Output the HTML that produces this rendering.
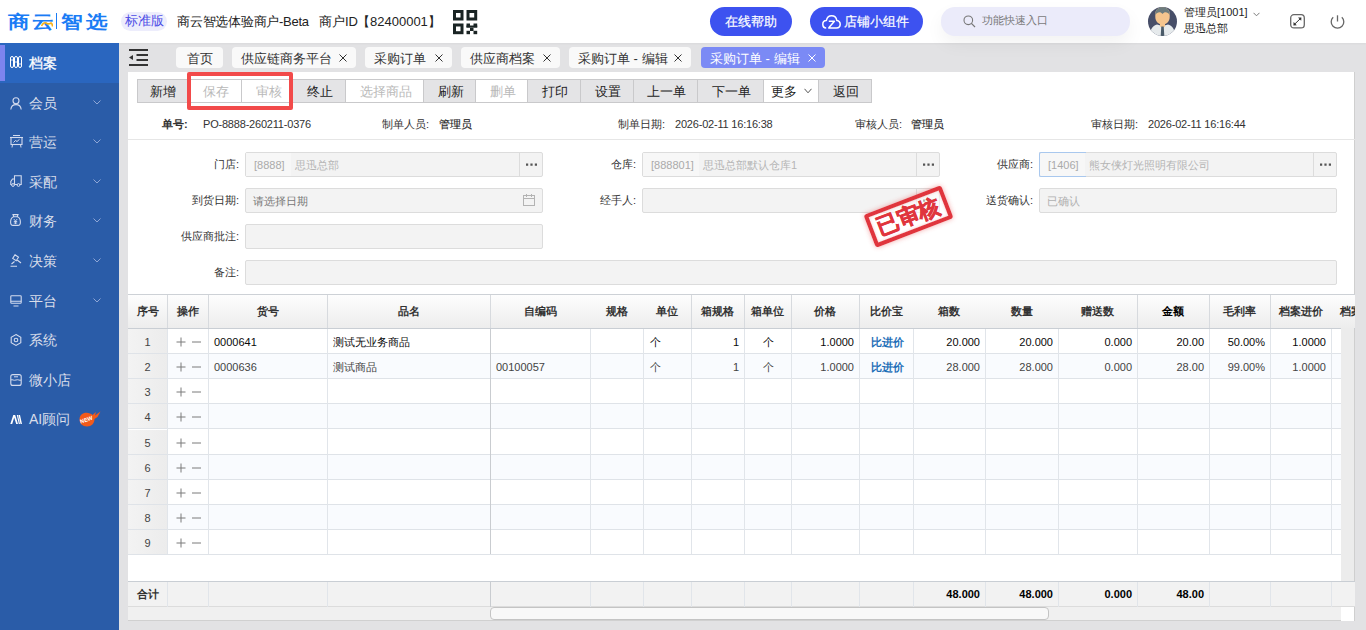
<!DOCTYPE html><html><head><meta charset="utf-8"><title>r</title><style>
*{margin:0;padding:0;box-sizing:border-box}
html,body{width:1366px;height:630px;overflow:hidden;background:#e2e2e4;font-family:"Liberation Sans",sans-serif;color:#333}
.a{position:absolute;white-space:nowrap}
.hdr{left:0;top:0;width:1366px;height:43px;background:#fff;box-shadow:0 1px 2px rgba(0,0,0,.04)}
.logo{top:9px;font-size:18px;transform:scaleX(1.2);transform-origin:0 0;font-weight:700;-webkit-text-stroke:0px #1a7cf5;color:#1a7cf5;letter-spacing:1px;line-height:26px}
.badge{left:121px;top:12px;width:46px;height:19px;border-radius:10px;background:#ededfc;color:#4b4ce6;font-size:13px;line-height:18px;text-align:center}
.mtxt{top:12px;font-size:13px;color:#222;line-height:20px}
.pill{top:7px;height:29px;border-radius:15px;background:#3d52f0;color:#fff;font-size:13px;line-height:29px;-webkit-text-stroke:0.2px #fff}
.search{left:941px;top:7px;width:189px;height:29px;border-radius:14px;background:#ebebfa;box-shadow:0 8px 18px rgba(0,0,0,.05)}
.side{left:0;top:43px;width:119px;height:587px;background:#2a5ca8}
.si{left:0;width:119px;height:40px;color:#d9deea;font-size:14px}
.si .t{position:absolute;left:29px;top:0;line-height:40px}
.si .ic{position:absolute;left:10px;top:14px}
.chev{position:absolute;left:93px;top:17px}
.tab{top:47px;height:21px;border-radius:4px;background:#f9f9f9;font-size:13px;color:#333;line-height:21px}
.tab .x{position:absolute;right:8px;top:0}
.panel{left:128px;top:72px;width:1227px;height:549px;background:#fff;border-right:1px solid #cfcfcf}
.btn{top:79px;height:24px;background:#e4e4e6;border:1px solid #c9c9cb;border-left:none;font-size:13px;color:#222;line-height:24px;padding-left:3px;text-align:center}
.btn.d{background:#fff;color:#b9b9b9}
.lbl{font-size:11px;color:#333;line-height:14px}
.inp{height:25px;background:#f3f3f3;border:1px solid #dcdcdc;border-radius:2px}
.th{font-size:11px;font-weight:bold;color:#333;text-align:center}
.td{font-size:11px;color:#222}
</style></head><body>
<div class="a hdr"></div>
<div class="a logo" style="left:8px">商</div>
<div class="a logo" style="left:32px">云</div>
<div class="a logo" style="left:61px">智</div>
<div class="a logo" style="left:86px">选</div>
<div class="a" style="left:56px;top:13px;width:1px;height:16px;background:#1a7cf5"></div>
<svg class="a" style="left:41px;top:21px" width="12" height="6" viewBox="0 0 12 6"><path d="M0.5 5 C2 2 4 1 6 2.5 C7.5 3.5 9 2.5 10 2 C11 2.5 11.5 4 11.5 5.5" fill="none" stroke="#f5b21a" stroke-width="1.6"/></svg>
<div class="a badge">标准版</div>
<div class="a mtxt" style="left:177px;letter-spacing:-0.25px">商云智选体验商户-Beta</div>
<div class="a mtxt" style="left:319px">商户ID</div>
<div class="a mtxt" style="left:357px">【82400001】</div>
<svg class="a" style="left:452.5px;top:9.5px" width="25" height="25" viewBox="0 0 25 25">
<g fill="none" stroke="#1a2424" stroke-width="3"><rect x="1.5" y="1.5" width="7.5" height="7.5"/><rect x="15" y="1.5" width="7.7" height="7.5"/><rect x="1.5" y="15" width="7.5" height="7.7"/></g>
<g fill="#1a2424"><rect x="13.5" y="13.5" width="3.5" height="4"/><rect x="20.5" y="13.5" width="3.7" height="4"/><rect x="13.5" y="15.5" width="10.7" height="2"/><rect x="17" y="17.5" width="3.5" height="3.5"/><rect x="13.5" y="20.8" width="3.5" height="3.4"/><rect x="20.5" y="20.8" width="3.7" height="3.4"/></g></svg>
<div class="a pill" style="left:710px;width:82px;text-align:center">在线帮助</div>
<div class="a pill" style="left:810px;width:113px"><svg style="position:absolute;left:12px;top:7.5px" width="19" height="14" viewBox="0 0 19 14"><path d="M4.2 13 C2 13 0.8 11.2 0.8 9.2 C0.8 7 2.4 5.4 4.4 5.4 C5 2.6 7 0.8 9.6 0.8 C12.4 0.8 14.4 2.8 14.8 5.4 C16.8 5.7 18.2 7.3 18.2 9.3 C18.2 11.5 16.6 13 14.4 13 H6.2 M6.8 6.2 H12.4 L6.6 13" fill="none" stroke="#fff" stroke-width="1.5" stroke-linejoin="round"/></svg><span style="position:absolute;left:34px;top:0">店铺小组件</span></div>
<div class="a search"></div>
<svg class="a" style="left:963px;top:14.5px" width="13" height="13" viewBox="0 0 13 13"><circle cx="5.3" cy="5.3" r="4.3" fill="none" stroke="#777" stroke-width="1.1"/><path d="M8.4 8.4 L12 12" stroke="#777" stroke-width="1.2"/></svg>
<div class="a" style="left:982px;top:12px;font-size:11px;color:#7a7a7a;line-height:16px">功能快速入口</div>
<svg class="a" style="left:1148px;top:6.6px" width="29" height="29" viewBox="0 0 29 29"><defs><clipPath id="cav"><circle cx="14.5" cy="14.5" r="14.5"/></clipPath></defs>
<g clip-path="url(#cav)"><rect width="29" height="29" fill="#474e68"/>
<path d="M2 29 C2 22 5 18.5 9 17.5 L14.5 19 L20 17.5 C24 18.5 27 22 27 29Z" fill="#e6eaec"/>
<path d="M12 14 H17 V19.5 L14.5 21 L12 19.5Z" fill="#f5c58e"/>
<path d="M7.3 7 C7.3 2.5 10.5 0.5 14.5 0.5 C18.5 0.5 21.7 2.5 21.7 7 L21.7 10 C21.7 14.5 18.5 17.5 14.5 17.5 C10.5 17.5 7.3 14.5 7.3 10Z" fill="#f5c58e"/>
<path d="M7.3 8 C7.3 2.5 10.5 0.3 14.5 0.3 C18.5 0.3 21.7 2.5 21.7 8 C20.5 6 19 5 17 5.2 C16 5.3 15 6.5 14.5 7 C14 6.5 13 5.3 12 5.2 C10 5 8.5 6 7.3 8Z" fill="#6d7c7e"/>
<path d="M13.3 19.5 H15.7 L16.3 29 H12.7Z" fill="#4b5b69"/>
</g></svg>
<div class="a" style="left:1184px;top:5px;font-size:11px;color:#222;line-height:15px">管理员[1001]</div>
<svg class="a" style="left:1253px;top:12px" width="7" height="5" viewBox="0 0 7 5"><path d="M0.5 0.8 L3.5 3.8 L6.5 0.8" fill="none" stroke="#7a7a7a" stroke-width="1"/></svg>
<div class="a" style="left:1184px;top:21px;font-size:11px;color:#222;line-height:15px">思迅总部</div>
<svg class="a" style="left:1290px;top:14px" width="15" height="15" viewBox="0 0 15 15"><rect x="0.7" y="0.7" width="13.6" height="13.2" rx="3.2" fill="none" stroke="#666" stroke-width="1.3"/><path d="M4.6 10.2 L10.4 4.6" stroke="#333" stroke-width="1"/><path d="M8 3.6 L11.4 3.4 L11.2 6.8Z M3.6 8 L3.4 11.4 L6.8 11.2Z" fill="#333"/></svg>
<svg class="a" style="left:1330px;top:15px" width="15" height="14" viewBox="0 0 15 14"><path d="M3.2 2.2 A6.3 6.3 0 1 0 11.8 2.2" fill="none" stroke="#666" stroke-width="1.3"/><path d="M7.5 0.3 V6.5" stroke="#666" stroke-width="1.3"/></svg>
<div class="a side"></div>
<div class="a si" style="top:43.0px;background:#2a66bf;color:#fff;font-weight:normal;-webkit-text-stroke:0.3px #fff"><div class="a" style="left:0;top:2px;width:5px;height:36px;background:#7c84ee"></div><svg class="ic" style="top:13px" width="12" height="12" viewBox="0 0 12 12"><g fill="none" stroke="#fff" stroke-width="1"><rect x="0.5" y="0.5" width="3" height="11" rx="1.5"/><rect x="4.5" y="0.5" width="3" height="11" rx="1.5"/><rect x="8.5" y="0.5" width="3" height="11" rx="1.5"/></g><path d="M1 4 H3 M5 6 H7 M9 8 H11" stroke="#fff" stroke-width="0.8"/></svg><span class="t">档案</span></div>
<div class="a si" style="top:82.6px"><svg class="ic" style="top:14px" width="12" height="13" viewBox="0 0 12 13"><circle cx="6" cy="3.8" r="3" fill="none" stroke="#d3dbee" stroke-width="1.1"/><path d="M0.8 12.5 C1.2 9 3.3 7.6 6 7.6 C8.7 7.6 10.8 9 11.2 12.5" fill="none" stroke="#d3dbee" stroke-width="1.1"/></svg><span class="t">会员</span><svg class="chev" width="8" height="5" viewBox="0 0 8 5"><path d="M0.5 0.5 L4 4 L7.5 0.5" fill="none" stroke="#8ea6d6" stroke-width="1"/></svg></div>
<div class="a si" style="top:122.2px"><svg class="ic" style="top:13px" width="13" height="13" viewBox="0 0 13 13"><rect x="1" y="2.5" width="11" height="7" fill="none" stroke="#d3dbee" stroke-width="1.1"/><path d="M0 2.5 H13 M3 0.5 H10 M2.5 9.5 L2 12.5 M10.5 9.5 L11 12.5 M3.5 7.5 L5.5 5.5 L7 6.5 L9.5 4.3" fill="none" stroke="#d3dbee" stroke-width="1"/></svg><span class="t">营运</span><svg class="chev" width="8" height="5" viewBox="0 0 8 5"><path d="M0.5 0.5 L4 4 L7.5 0.5" fill="none" stroke="#8ea6d6" stroke-width="1"/></svg></div>
<div class="a si" style="top:161.8px"><svg class="ic" style="top:13px" width="12" height="12" viewBox="0 0 12 12"><path d="M4.5 0.8 H11.2 V9.5 H4.5 Z M4.5 4 H2.5 L0.8 6.5 V9.5 H4.5" fill="none" stroke="#d3dbee" stroke-width="1.1"/><circle cx="3" cy="10" r="1.4" fill="#2a5ca8" stroke="#d3dbee" stroke-width="1"/><circle cx="8.5" cy="10" r="1.4" fill="#2a5ca8" stroke="#d3dbee" stroke-width="1"/></svg><span class="t">采配</span><svg class="chev" width="8" height="5" viewBox="0 0 8 5"><path d="M0.5 0.5 L4 4 L7.5 0.5" fill="none" stroke="#8ea6d6" stroke-width="1"/></svg></div>
<div class="a si" style="top:201.4px"><svg class="ic" style="top:13px" width="11" height="12" viewBox="0 0 11 12"><path d="M3 0.6 H8 L7.2 2.8 H3.8 Z M3.8 2.8 C1.5 3.5 0.6 5.5 0.6 8 C0.6 10.5 1.5 11.4 3 11.4 H8 C9.5 11.4 10.4 10.5 10.4 8 C10.4 5.5 9.5 3.5 7.2 2.8" fill="none" stroke="#d3dbee" stroke-width="1.1"/><path d="M3.8 5 L5.5 7 L7.2 5 M5.5 7 V10 M3.8 7.5 H7.2 M3.8 9 H7.2" fill="none" stroke="#d3dbee" stroke-width="0.9"/></svg><span class="t">财务</span><svg class="chev" width="8" height="5" viewBox="0 0 8 5"><path d="M0.5 0.5 L4 4 L7.5 0.5" fill="none" stroke="#8ea6d6" stroke-width="1"/></svg></div>
<div class="a si" style="top:241.0px"><svg class="ic" style="top:13px" width="12" height="13" viewBox="0 0 12 13"><path d="M5 0.8 L8.5 3.2 L6.2 6.8 L2.7 4.4 Z M6.5 5.5 L11 9 M1.5 10 L4.5 7.5 M0.5 12.2 H7" fill="none" stroke="#d3dbee" stroke-width="1.1"/></svg><span class="t">决策</span><svg class="chev" width="8" height="5" viewBox="0 0 8 5"><path d="M0.5 0.5 L4 4 L7.5 0.5" fill="none" stroke="#8ea6d6" stroke-width="1"/></svg></div>
<div class="a si" style="top:280.6px"><svg class="ic" style="top:14px" width="12" height="12" viewBox="0 0 12 12"><rect x="0.8" y="0.8" width="10.4" height="7.4" rx="0.8" fill="none" stroke="#d3dbee" stroke-width="1.1"/><path d="M0.8 6.2 H11.2 M3.5 11 H8.5" stroke="#d3dbee" stroke-width="1.1"/></svg><span class="t">平台</span><svg class="chev" width="8" height="5" viewBox="0 0 8 5"><path d="M0.5 0.5 L4 4 L7.5 0.5" fill="none" stroke="#8ea6d6" stroke-width="1"/></svg></div>
<div class="a si" style="top:320.2px"><svg class="ic" style="top:14px" width="12" height="12" viewBox="0 0 12 12"><path d="M6 0.6 L10.8 3.3 V8.7 L6 11.4 L1.2 8.7 V3.3 Z" fill="none" stroke="#d3dbee" stroke-width="1.1"/><circle cx="6" cy="6" r="1.8" fill="none" stroke="#d3dbee" stroke-width="1.1"/></svg><span class="t">系统</span></div>
<div class="a si" style="top:359.8px"><svg class="ic" style="top:14px" width="12" height="12" viewBox="0 0 12 12"><rect x="0.8" y="0.6" width="10.4" height="10.8" rx="2" fill="none" stroke="#d3dbee" stroke-width="1.1"/><path d="M4 2.8 H8 M0.8 6 C2.5 5 3.5 7 6 6 C8.5 5 9.5 7 11.2 6" fill="none" stroke="#d3dbee" stroke-width="1"/></svg><span class="t">微小店</span></div>
<div class="a si" style="top:399.4px"><svg class="ic" style="top:16px" width="12" height="9" viewBox="0 0 12 9"><path d="M0.3 9 L3.3 0 H5.2 L8 9 H6.2 L4.2 2.5 L2.2 9 Z M8.5 0 H10 L12 9 H10.5 Z M6.8 0 H8 L10 9 H8.8Z" fill="#fff"/></svg><span class="t">AI顾问</span><svg style="position:absolute;left:79px;top:12px" width="22" height="16" viewBox="0 0 22 16"><path d="M8 15.5 C3.5 15.5 0.5 12.5 0.5 8.5 C0.5 4.5 3.5 1.8 7.5 1.8 C10 1.8 12 2.8 13.5 4 L17 1 L16 4.5 L21.5 0.5 L18.5 6 L15.5 8 C15.5 12.5 12.5 15.5 8 15.5Z" fill="#f25a1a"/><text x="7.5" y="10.5" font-size="5.5" font-weight="bold" fill="#fff" text-anchor="middle" transform="rotate(-18 7.5 9)" font-family="Liberation Sans">NEW</text></svg></div>
<svg class="a" style="left:129px;top:49px" width="19" height="17" viewBox="0 0 19 17"><rect x="0" y="0" width="19" height="2" fill="#333"/><rect x="7.5" y="5" width="11.5" height="2" fill="#333"/><rect x="7.5" y="10" width="11.5" height="2" fill="#333"/><rect x="0" y="15" width="19" height="2" fill="#333"/><path d="M0 8.5 L4 6 V11Z" fill="#333"/></svg>
<div class="a tab" style="left:176px;width:47px"><span style="position:absolute;left:0;width:100%;text-align:center;top:1px">首页</span></div>
<div class="a tab" style="left:232px;width:124px"><span style="position:absolute;left:9px;top:1px">供应链商务平台</span><svg class="x" style="top:6.5px;right:9px" width="8" height="8" viewBox="0 0 8 8"><path d="M0.5 0.5 L7.5 7.5 M7.5 0.5 L0.5 7.5" stroke="#333" stroke-width="1"/></svg></div>
<div class="a tab" style="left:365px;width:87px"><span style="position:absolute;left:9px;top:1px">采购订单</span><svg class="x" style="top:6.5px;right:9px" width="8" height="8" viewBox="0 0 8 8"><path d="M0.5 0.5 L7.5 7.5 M7.5 0.5 L0.5 7.5" stroke="#333" stroke-width="1"/></svg></div>
<div class="a tab" style="left:461px;width:99px"><span style="position:absolute;left:9px;top:1px">供应商档案</span><svg class="x" style="top:6.5px;right:9px" width="8" height="8" viewBox="0 0 8 8"><path d="M0.5 0.5 L7.5 7.5 M7.5 0.5 L0.5 7.5" stroke="#333" stroke-width="1"/></svg></div>
<div class="a tab" style="left:569px;width:122px"><span style="position:absolute;left:9px;top:1px">采购订单 - 编辑</span><svg class="x" style="top:6.5px;right:9px" width="8" height="8" viewBox="0 0 8 8"><path d="M0.5 0.5 L7.5 7.5 M7.5 0.5 L0.5 7.5" stroke="#333" stroke-width="1"/></svg></div>
<div class="a tab" style="left:701px;width:124px;background:#7b8af5;color:#fff"><span style="position:absolute;left:9px;top:1px">采购订单 - 编辑</span><svg class="x" style="top:6.5px;right:9px" width="8" height="8" viewBox="0 0 8 8"><path d="M0.5 0.5 L7.5 7.5 M7.5 0.5 L0.5 7.5" stroke="#fff" stroke-width="1"/></svg></div>
<div class="a panel"></div>
<div class="a btn" style="left:137px;width:53px;border-left:1px solid #c9c9cb"></div>
<div class="a" style="left:150.2px;top:80px;font-size:13px;line-height:23px;color:#222">新增</div>
<div class="a btn d" style="left:190px;width:52px"></div>
<div class="a" style="left:203.0px;top:80px;font-size:13px;line-height:23px;color:#b9b9b9">保存</div>
<div class="a btn d" style="left:242px;width:48px"></div>
<div class="a" style="left:255.8px;top:80px;font-size:13px;line-height:23px;color:#b9b9b9">审核</div>
<div class="a btn" style="left:290px;width:56px"></div>
<div class="a" style="left:307.3px;top:80px;font-size:13px;line-height:23px;color:#222">终止</div>
<div class="a btn d" style="left:346px;width:78px"></div>
<div class="a" style="left:360.1px;top:80px;font-size:13px;line-height:23px;color:#b9b9b9">选择商品</div>
<div class="a btn" style="left:424px;width:52px"></div>
<div class="a" style="left:438.1px;top:80px;font-size:13px;line-height:23px;color:#222">刷新</div>
<div class="a btn d" style="left:476px;width:52px"></div>
<div class="a" style="left:489.8px;top:80px;font-size:13px;line-height:23px;color:#b9b9b9">删单</div>
<div class="a btn" style="left:528px;width:53px"></div>
<div class="a" style="left:542.3px;top:80px;font-size:13px;line-height:23px;color:#222">打印</div>
<div class="a btn" style="left:581px;width:53px"></div>
<div class="a" style="left:594.8px;top:80px;font-size:13px;line-height:23px;color:#222">设置</div>
<div class="a btn" style="left:634px;width:64px"></div>
<div class="a" style="left:647.3px;top:80px;font-size:13px;line-height:23px;color:#222">上一单</div>
<div class="a btn" style="left:698px;width:66px"></div>
<div class="a" style="left:711.9px;top:80px;font-size:13px;line-height:23px;color:#222">下一单</div>
<div class="a btn d" style="left:764px;width:55px"></div>
<div class="a" style="left:771.3px;top:80px;font-size:13px;line-height:23px;color:#222">更多</div>
<svg class="a" style="left:804px;top:88px" width="8" height="6" viewBox="0 0 8 6"><path d="M0.5 0.8 L4 4.8 L7.5 0.8" fill="none" stroke="#555" stroke-width="1"/></svg>
<div class="a btn" style="left:819px;width:53px"></div>
<div class="a" style="left:832.5px;top:80px;font-size:13px;line-height:23px;color:#222">返回</div>
<div class="a" style="left:187px;top:72px;width:106px;height:38px;border:4px solid #f24a4a;border-radius:2px"></div>
<div class="a lbl" style="left:162px;top:117px;font-weight:bold">单号:</div>
<div class="a lbl" style="left:203px;top:117px;;letter-spacing:-0.2px">PO-8888-260211-0376</div>
<div class="a lbl" style="left:382px;top:117px;">制单人员:</div>
<div class="a lbl" style="left:439px;top:117px;-webkit-text-stroke:0.15px #222;color:#222">管理员</div>
<div class="a lbl" style="left:618px;top:117px;">制单日期:</div>
<div class="a lbl" style="left:675px;top:117px;;letter-spacing:-0.2px">2026-02-11 16:16:38</div>
<div class="a lbl" style="left:855px;top:117px;">审核人员:</div>
<div class="a lbl" style="left:911px;top:117px;-webkit-text-stroke:0.15px #222;color:#222">管理员</div>
<div class="a lbl" style="left:1091px;top:117px;">审核日期:</div>
<div class="a lbl" style="left:1148px;top:117px;;letter-spacing:-0.2px">2026-02-11 16:16:44</div>
<div class="a" style="left:128px;top:139px;width:1227px;height:1px;background:#e6e6e6"></div>
<div class="a lbl" style="left:119px;top:157px;width:120px;text-align:right">门店:</div>
<div class="a inp" style="left:245px;top:152px;width:298px"></div>
<div class="a" style="left:246px;top:153px;width:45px;height:23px;background:#f7f7f7"></div>
<div class="a" style="left:254px;top:158px;font-size:11px;color:#aaa;line-height:14px">[8888]</div>
<div class="a" style="left:295px;top:158px;font-size:11px;color:#b5b5b5;line-height:14px">思迅总部</div>
<div class="a" style="left:519px;top:153px;width:1px;height:23px;background:#dcdcdc"></div>
<svg class="a" style="left:526px;top:163px" width="12" height="3" viewBox="0 0 12 3"><path d="M0 0.5 h2.2 v2.2 h-2.2z M4.4 0.5 h2.2 v2.2 h-2.2z M8.8 0.5 h2.2 v2.2 h-2.2z" fill="#555"/></svg>
<div class="a lbl" style="left:119px;top:193px;width:120px;text-align:right">到货日期:</div>
<div class="a inp" style="left:245px;top:188px;width:298px"></div>
<svg class="a" style="left:523px;top:194px" width="12" height="12" viewBox="0 0 12 12"><rect x="0.5" y="1.5" width="11" height="10" fill="none" stroke="#b3b3b3"/><path d="M0.5 4.5 H11.5 M3.5 0 V3 M8.5 0 V3" stroke="#b3b3b3"/></svg>
<div class="a" style="left:253px;top:194px;font-size:11px;color:#777;line-height:14px">请选择日期</div>
<div class="a lbl" style="left:119px;top:229px;width:120px;text-align:right">供应商批注:</div>
<div class="a inp" style="left:245px;top:224px;width:298px"></div>
<div class="a lbl" style="left:119px;top:265px;width:120px;text-align:right">备注:</div>
<div class="a inp" style="left:245px;top:260px;width:1092px"></div>
<div class="a lbl" style="left:516px;top:157px;width:120px;text-align:right">仓库:</div>
<div class="a inp" style="left:642px;top:152px;width:298px"></div>
<div class="a" style="left:643px;top:153px;width:56px;height:23px;background:#f7f7f7"></div>
<div class="a" style="left:651px;top:158px;font-size:11px;color:#aaa;line-height:14px">[888801]</div>
<div class="a" style="left:703px;top:158px;font-size:11px;color:#b5b5b5;line-height:14px">思迅总部默认仓库1</div>
<div class="a" style="left:916px;top:153px;width:1px;height:23px;background:#dcdcdc"></div>
<svg class="a" style="left:923px;top:163px" width="12" height="3" viewBox="0 0 12 3"><path d="M0 0.5 h2.2 v2.2 h-2.2z M4.4 0.5 h2.2 v2.2 h-2.2z M8.8 0.5 h2.2 v2.2 h-2.2z" fill="#555"/></svg>
<div class="a lbl" style="left:516px;top:193px;width:120px;text-align:right">经手人:</div>
<div class="a inp" style="left:642px;top:188px;width:298px"></div>
<div class="a" style="left:916px;top:189px;width:1px;height:23px;background:#dcdcdc"></div>
<svg class="a" style="left:923px;top:199px" width="12" height="3" viewBox="0 0 12 3"><path d="M0 0.5 h2.2 v2.2 h-2.2z M4.4 0.5 h2.2 v2.2 h-2.2z M8.8 0.5 h2.2 v2.2 h-2.2z" fill="#555"/></svg>
<div class="a lbl" style="left:913px;top:157px;width:120px;text-align:right">供应商:</div>
<div class="a inp" style="left:1039px;top:152px;width:298px"></div>
<div class="a" style="left:1040px;top:153px;width:45px;height:23px;background:#f7f7f7"></div>
<div class="a" style="left:1048px;top:158px;font-size:11px;color:#aaa;line-height:14px">[1406]</div>
<div class="a" style="left:1089px;top:158px;font-size:11px;color:#b5b5b5;line-height:14px">熊女侠灯光照明有限公司</div>
<div class="a" style="left:1313px;top:153px;width:1px;height:23px;background:#dcdcdc"></div>
<svg class="a" style="left:1320px;top:163px" width="12" height="3" viewBox="0 0 12 3"><path d="M0 0.5 h2.2 v2.2 h-2.2z M4.4 0.5 h2.2 v2.2 h-2.2z M8.8 0.5 h2.2 v2.2 h-2.2z" fill="#555"/></svg>
<div class="a" style="left:1039px;top:152px;width:47px;height:25px;border:1px solid #a9c8ee;border-right:none;border-radius:2px 0 0 2px"></div>
<div class="a lbl" style="left:913px;top:193px;width:120px;text-align:right">送货确认:</div>
<div class="a inp" style="left:1039px;top:188px;width:298px"></div>
<div class="a" style="left:1047px;top:194px;font-size:11px;color:#b0b0b0;line-height:14px">已确认</div>
<div class="a" style="left:867px;top:199px;width:83px;height:35px;border:4px solid #e0353d;border-radius:3px;transform:rotate(-21deg);background:rgba(255,255,255,.55);color:#e0353d;font-size:22px;font-weight:bold;-webkit-text-stroke:0.6px #e0353d;line-height:27px;text-align:center;letter-spacing:0px;box-shadow:0 0 5px rgba(230,60,60,.45), inset 0 0 3px rgba(230,60,60,.3)">已审核</div>
<div class="a" style="left:128px;top:294px;width:1227px;height:327px;overflow:hidden">
<div class="a" style="left:0;top:0;width:1227px;height:35px;background:linear-gradient(#fdfdfd,#ededed);border-top:1px solid #cdd1d6;border-bottom:1px solid #c9ced4"></div>
<div class="a th" style="left:0px;top:10px;width:39px;line-height:14px;color:#333">序号</div>
<div class="a th" style="left:39px;top:10px;width:41px;line-height:14px;color:#333">操作</div>
<div class="a" style="left:39px;top:1px;width:1px;height:33px;background:#d7dade"></div>
<div class="a th" style="left:80px;top:10px;width:119px;line-height:14px;color:#333">货号</div>
<div class="a" style="left:80px;top:1px;width:1px;height:33px;background:#d7dade"></div>
<div class="a th" style="left:199px;top:10px;width:163px;line-height:14px;color:#333">品名</div>
<div class="a" style="left:199px;top:1px;width:1px;height:33px;background:#d7dade"></div>
<div class="a th" style="left:362px;top:10px;width:100px;line-height:14px;color:#333">自编码</div>
<div class="a" style="left:362px;top:1px;width:1px;height:33px;background:#d7dade"></div>
<div class="a th" style="left:462px;top:10px;width:53px;line-height:14px;color:#333">规格</div>
<div class="a th" style="left:515px;top:10px;width:48px;line-height:14px;color:#333">单位</div>
<div class="a th" style="left:563px;top:10px;width:53px;line-height:14px;color:#333">箱规格</div>
<div class="a" style="left:563px;top:1px;width:1px;height:33px;background:#d7dade"></div>
<div class="a th" style="left:616px;top:10px;width:47px;line-height:14px;color:#333">箱单位</div>
<div class="a" style="left:616px;top:1px;width:1px;height:33px;background:#d7dade"></div>
<div class="a th" style="left:663px;top:10px;width:68px;line-height:14px;color:#333">价格</div>
<div class="a" style="left:663px;top:1px;width:1px;height:33px;background:#d7dade"></div>
<div class="a th" style="left:731px;top:10px;width:54px;line-height:14px;color:#333">比价宝</div>
<div class="a" style="left:731px;top:1px;width:1px;height:33px;background:#d7dade"></div>
<div class="a th" style="left:785px;top:10px;width:72px;line-height:14px;color:#333">箱数</div>
<div class="a th" style="left:857px;top:10px;width:73px;line-height:14px;color:#333">数量</div>
<div class="a th" style="left:930px;top:10px;width:79px;line-height:14px;color:#333">赠送数</div>
<div class="a th" style="left:1009px;top:10px;width:72px;line-height:14px;color:#000">金额</div>
<div class="a" style="left:1009px;top:1px;width:1px;height:33px;background:#d7dade"></div>
<div class="a th" style="left:1081px;top:10px;width:61px;line-height:14px;color:#333">毛利率</div>
<div class="a" style="left:1081px;top:1px;width:1px;height:33px;background:#d7dade"></div>
<div class="a th" style="left:1142px;top:10px;width:61px;line-height:14px;color:#333">档案进价</div>
<div class="a" style="left:1142px;top:1px;width:1px;height:33px;background:#d7dade"></div>
<div class="a th" style="left:1212px;top:10px;line-height:14px">档案进价</div>
<div class="a" style="left:0;top:35.00px;width:1213px;height:25.12px;background:#fff;border-bottom:1px solid #dfe3e8"></div>
<div class="a" style="left:0;top:35.00px;width:39px;height:25.12px;background:linear-gradient(90deg,#f3f3f3,#ececec);border-bottom:1px solid #dfe3e8"></div>
<div class="a td" style="left:0;top:36.00px;width:39px;text-align:center;line-height:25.12px;color:#444">1</div>
<svg class="a" style="left:48px;top:43.00px" width="26" height="10" viewBox="0 0 26 10"><path d="M0.5 5 H9.5 M5 0.5 V9.5 M16 5 H25" stroke="#7a7a7a" stroke-width="1"/></svg>
<div class="a td" style="left:86px;top:36.00px;line-height:25.12px;color:#0a0a0a">0000641</div>
<div class="a td" style="left:205px;top:36.00px;line-height:25.12px;color:#0a0a0a">测试无业务商品</div>
<div class="a td" style="left:522px;top:36.00px;line-height:25.12px;color:#0a0a0a">个</div>
<div class="a td" style="left:563px;top:36.00px;width:48px;text-align:right;line-height:25.12px;color:#0a0a0a">1</div>
<div class="a td" style="left:617px;top:36.00px;width:47px;text-align:center;line-height:25.12px;color:#0a0a0a">个</div>
<div class="a td" style="left:663px;top:36.00px;width:63px;text-align:right;line-height:25.12px;color:#0a0a0a">1.0000</div>
<div class="a td" style="left:732px;top:36.00px;width:54px;text-align:center;line-height:25.12px;color:#1f6fb8;font-weight:bold">比进价</div>
<div class="a td" style="left:785px;top:36.00px;width:67px;text-align:right;line-height:25.12px;color:#0a0a0a">20.000</div>
<div class="a td" style="left:857px;top:36.00px;width:68px;text-align:right;line-height:25.12px;color:#0a0a0a">20.000</div>
<div class="a td" style="left:930px;top:36.00px;width:74px;text-align:right;line-height:25.12px;color:#0a0a0a">0.000</div>
<div class="a td" style="left:1009px;top:36.00px;width:67px;text-align:right;line-height:25.12px;color:#0a0a0a">20.00</div>
<div class="a td" style="left:1081px;top:36.00px;width:56px;text-align:right;line-height:25.12px;color:#0a0a0a">50.00%</div>
<div class="a td" style="left:1142px;top:36.00px;width:56px;text-align:right;line-height:25.12px;color:#0a0a0a">1.0000</div>
<div class="a" style="left:0;top:60.12px;width:1213px;height:25.12px;background:#f9fbfe;border-bottom:1px solid #dfe3e8"></div>
<div class="a" style="left:0;top:60.12px;width:39px;height:25.12px;background:linear-gradient(90deg,#f3f3f3,#ececec);border-bottom:1px solid #dfe3e8"></div>
<div class="a td" style="left:0;top:61.12px;width:39px;text-align:center;line-height:25.12px;color:#444">2</div>
<svg class="a" style="left:48px;top:68.00px" width="26" height="10" viewBox="0 0 26 10"><path d="M0.5 5 H9.5 M5 0.5 V9.5 M16 5 H25" stroke="#7a7a7a" stroke-width="1"/></svg>
<div class="a td" style="left:86px;top:61.12px;line-height:25.12px;color:#444">0000636</div>
<div class="a td" style="left:205px;top:61.12px;line-height:25.12px;color:#444">测试商品</div>
<div class="a td" style="left:368px;top:61.12px;line-height:25.12px;color:#444">00100057</div>
<div class="a td" style="left:522px;top:61.12px;line-height:25.12px;color:#444">个</div>
<div class="a td" style="left:563px;top:61.12px;width:48px;text-align:right;line-height:25.12px;color:#444">1</div>
<div class="a td" style="left:617px;top:61.12px;width:47px;text-align:center;line-height:25.12px;color:#444">个</div>
<div class="a td" style="left:663px;top:61.12px;width:63px;text-align:right;line-height:25.12px;color:#444">1.0000</div>
<div class="a td" style="left:732px;top:61.12px;width:54px;text-align:center;line-height:25.12px;color:#1f6fb8;font-weight:bold">比进价</div>
<div class="a td" style="left:785px;top:61.12px;width:67px;text-align:right;line-height:25.12px;color:#444">28.000</div>
<div class="a td" style="left:857px;top:61.12px;width:68px;text-align:right;line-height:25.12px;color:#444">28.000</div>
<div class="a td" style="left:930px;top:61.12px;width:74px;text-align:right;line-height:25.12px;color:#444">0.000</div>
<div class="a td" style="left:1009px;top:61.12px;width:67px;text-align:right;line-height:25.12px;color:#444">28.00</div>
<div class="a td" style="left:1081px;top:61.12px;width:56px;text-align:right;line-height:25.12px;color:#444">99.00%</div>
<div class="a td" style="left:1142px;top:61.12px;width:56px;text-align:right;line-height:25.12px;color:#444">1.0000</div>
<div class="a" style="left:0;top:85.25px;width:1213px;height:25.12px;background:#fff;border-bottom:1px solid #dfe3e8"></div>
<div class="a" style="left:0;top:85.25px;width:39px;height:25.12px;background:linear-gradient(90deg,#f3f3f3,#ececec);border-bottom:1px solid #dfe3e8"></div>
<div class="a td" style="left:0;top:86.25px;width:39px;text-align:center;line-height:25.12px;color:#444">3</div>
<svg class="a" style="left:48px;top:93.00px" width="26" height="10" viewBox="0 0 26 10"><path d="M0.5 5 H9.5 M5 0.5 V9.5 M16 5 H25" stroke="#7a7a7a" stroke-width="1"/></svg>
<div class="a" style="left:0;top:110.38px;width:1213px;height:25.12px;background:#f9fbfe;border-bottom:1px solid #dfe3e8"></div>
<div class="a" style="left:0;top:110.38px;width:39px;height:25.12px;background:linear-gradient(90deg,#f3f3f3,#ececec);border-bottom:1px solid #dfe3e8"></div>
<div class="a td" style="left:0;top:111.38px;width:39px;text-align:center;line-height:25.12px;color:#444">4</div>
<svg class="a" style="left:48px;top:118.00px" width="26" height="10" viewBox="0 0 26 10"><path d="M0.5 5 H9.5 M5 0.5 V9.5 M16 5 H25" stroke="#7a7a7a" stroke-width="1"/></svg>
<div class="a" style="left:0;top:135.50px;width:1213px;height:25.12px;background:#fff;border-bottom:1px solid #dfe3e8"></div>
<div class="a" style="left:0;top:135.50px;width:39px;height:25.12px;background:linear-gradient(90deg,#f3f3f3,#ececec);border-bottom:1px solid #dfe3e8"></div>
<div class="a td" style="left:0;top:136.50px;width:39px;text-align:center;line-height:25.12px;color:#444">5</div>
<svg class="a" style="left:48px;top:144.00px" width="26" height="10" viewBox="0 0 26 10"><path d="M0.5 5 H9.5 M5 0.5 V9.5 M16 5 H25" stroke="#7a7a7a" stroke-width="1"/></svg>
<div class="a" style="left:0;top:160.62px;width:1213px;height:25.12px;background:#f9fbfe;border-bottom:1px solid #dfe3e8"></div>
<div class="a" style="left:0;top:160.62px;width:39px;height:25.12px;background:linear-gradient(90deg,#f3f3f3,#ececec);border-bottom:1px solid #dfe3e8"></div>
<div class="a td" style="left:0;top:161.62px;width:39px;text-align:center;line-height:25.12px;color:#444">6</div>
<svg class="a" style="left:48px;top:169.00px" width="26" height="10" viewBox="0 0 26 10"><path d="M0.5 5 H9.5 M5 0.5 V9.5 M16 5 H25" stroke="#7a7a7a" stroke-width="1"/></svg>
<div class="a" style="left:0;top:185.75px;width:1213px;height:25.12px;background:#fff;border-bottom:1px solid #dfe3e8"></div>
<div class="a" style="left:0;top:185.75px;width:39px;height:25.12px;background:linear-gradient(90deg,#f3f3f3,#ececec);border-bottom:1px solid #dfe3e8"></div>
<div class="a td" style="left:0;top:186.75px;width:39px;text-align:center;line-height:25.12px;color:#444">7</div>
<svg class="a" style="left:48px;top:194.00px" width="26" height="10" viewBox="0 0 26 10"><path d="M0.5 5 H9.5 M5 0.5 V9.5 M16 5 H25" stroke="#7a7a7a" stroke-width="1"/></svg>
<div class="a" style="left:0;top:210.88px;width:1213px;height:25.12px;background:#f9fbfe;border-bottom:1px solid #dfe3e8"></div>
<div class="a" style="left:0;top:210.88px;width:39px;height:25.12px;background:linear-gradient(90deg,#f3f3f3,#ececec);border-bottom:1px solid #dfe3e8"></div>
<div class="a td" style="left:0;top:211.88px;width:39px;text-align:center;line-height:25.12px;color:#444">8</div>
<svg class="a" style="left:48px;top:219.00px" width="26" height="10" viewBox="0 0 26 10"><path d="M0.5 5 H9.5 M5 0.5 V9.5 M16 5 H25" stroke="#7a7a7a" stroke-width="1"/></svg>
<div class="a" style="left:0;top:236.00px;width:1213px;height:25.12px;background:#fff;border-bottom:1px solid #dfe3e8"></div>
<div class="a" style="left:0;top:236.00px;width:39px;height:25.12px;background:linear-gradient(90deg,#f3f3f3,#ececec);border-bottom:1px solid #dfe3e8"></div>
<div class="a td" style="left:0;top:237.00px;width:39px;text-align:center;line-height:25.12px;color:#444">9</div>
<svg class="a" style="left:48px;top:244.00px" width="26" height="10" viewBox="0 0 26 10"><path d="M0.5 5 H9.5 M5 0.5 V9.5 M16 5 H25" stroke="#7a7a7a" stroke-width="1"/></svg>
<div class="a" style="left:39px;top:35px;width:1px;height:225.12px;background:#e1e5ea"></div>
<div class="a" style="left:80px;top:35px;width:1px;height:225.12px;background:#e1e5ea"></div>
<div class="a" style="left:199px;top:35px;width:1px;height:225.12px;background:#e1e5ea"></div>
<div class="a" style="left:362px;top:35px;width:1px;height:225.12px;background:#c9ccd0"></div>
<div class="a" style="left:462px;top:35px;width:1px;height:225.12px;background:#e1e5ea"></div>
<div class="a" style="left:515px;top:35px;width:1px;height:225.12px;background:#e1e5ea"></div>
<div class="a" style="left:563px;top:35px;width:1px;height:225.12px;background:#e1e5ea"></div>
<div class="a" style="left:616px;top:35px;width:1px;height:225.12px;background:#e1e5ea"></div>
<div class="a" style="left:663px;top:35px;width:1px;height:225.12px;background:#e1e5ea"></div>
<div class="a" style="left:731px;top:35px;width:1px;height:225.12px;background:#e1e5ea"></div>
<div class="a" style="left:785px;top:35px;width:1px;height:225.12px;background:#e1e5ea"></div>
<div class="a" style="left:857px;top:35px;width:1px;height:225.12px;background:#e1e5ea"></div>
<div class="a" style="left:930px;top:35px;width:1px;height:225.12px;background:#e1e5ea"></div>
<div class="a" style="left:1009px;top:35px;width:1px;height:225.12px;background:#e1e5ea"></div>
<div class="a" style="left:1081px;top:35px;width:1px;height:225.12px;background:#e1e5ea"></div>
<div class="a" style="left:1142px;top:35px;width:1px;height:225.12px;background:#e1e5ea"></div>
<div class="a" style="left:1203px;top:35px;width:1px;height:225.12px;background:#e1e5ea"></div>
<div class="a" style="left:1213px;top:34px;width:13px;height:253px;background:#ececec"></div>
<div class="a" style="left:0;top:287px;width:1227px;height:26px;background:#f2f2f2;border-top:1px solid #c9ced4;border-bottom:1px solid #dcdcdc"></div>
<div class="a" style="left:39px;top:288px;width:1px;height:25px;background:#e1e5ea"></div>
<div class="a" style="left:80px;top:288px;width:1px;height:25px;background:#e1e5ea"></div>
<div class="a" style="left:199px;top:288px;width:1px;height:25px;background:#e1e5ea"></div>
<div class="a" style="left:362px;top:288px;width:1px;height:25px;background:#c9ccd0"></div>
<div class="a" style="left:462px;top:288px;width:1px;height:25px;background:#e1e5ea"></div>
<div class="a" style="left:515px;top:288px;width:1px;height:25px;background:#e1e5ea"></div>
<div class="a" style="left:563px;top:288px;width:1px;height:25px;background:#e1e5ea"></div>
<div class="a" style="left:616px;top:288px;width:1px;height:25px;background:#e1e5ea"></div>
<div class="a" style="left:663px;top:288px;width:1px;height:25px;background:#e1e5ea"></div>
<div class="a" style="left:731px;top:288px;width:1px;height:25px;background:#e1e5ea"></div>
<div class="a" style="left:785px;top:288px;width:1px;height:25px;background:#e1e5ea"></div>
<div class="a" style="left:857px;top:288px;width:1px;height:25px;background:#e1e5ea"></div>
<div class="a" style="left:930px;top:288px;width:1px;height:25px;background:#e1e5ea"></div>
<div class="a" style="left:1009px;top:288px;width:1px;height:25px;background:#e1e5ea"></div>
<div class="a" style="left:1081px;top:288px;width:1px;height:25px;background:#e1e5ea"></div>
<div class="a" style="left:1142px;top:288px;width:1px;height:25px;background:#e1e5ea"></div>
<div class="a" style="left:1203px;top:288px;width:1px;height:25px;background:#e1e5ea"></div>
<div class="a th" style="left:0;top:288px;width:39px;line-height:25px">合计</div>
<div class="a th" style="left:785px;top:288px;width:67px;text-align:right;line-height:25px;color:#000">48.000</div>
<div class="a th" style="left:857px;top:288px;width:68px;text-align:right;line-height:25px;color:#000">48.000</div>
<div class="a th" style="left:930px;top:288px;width:74px;text-align:right;line-height:25px;color:#000">0.000</div>
<div class="a th" style="left:1009px;top:288px;width:67px;text-align:right;line-height:25px;color:#000">48.00</div>
<div class="a" style="left:0;top:313px;width:1213px;height:14px;background:#f0f0f0;border-bottom:1px solid #d0d0d0"></div>
<div class="a" style="left:362px;top:313px;width:559px;height:13px;background:#f8f8f8;border:1px solid #c4c4c4;border-radius:4px"></div>
</div>
</body></html>
